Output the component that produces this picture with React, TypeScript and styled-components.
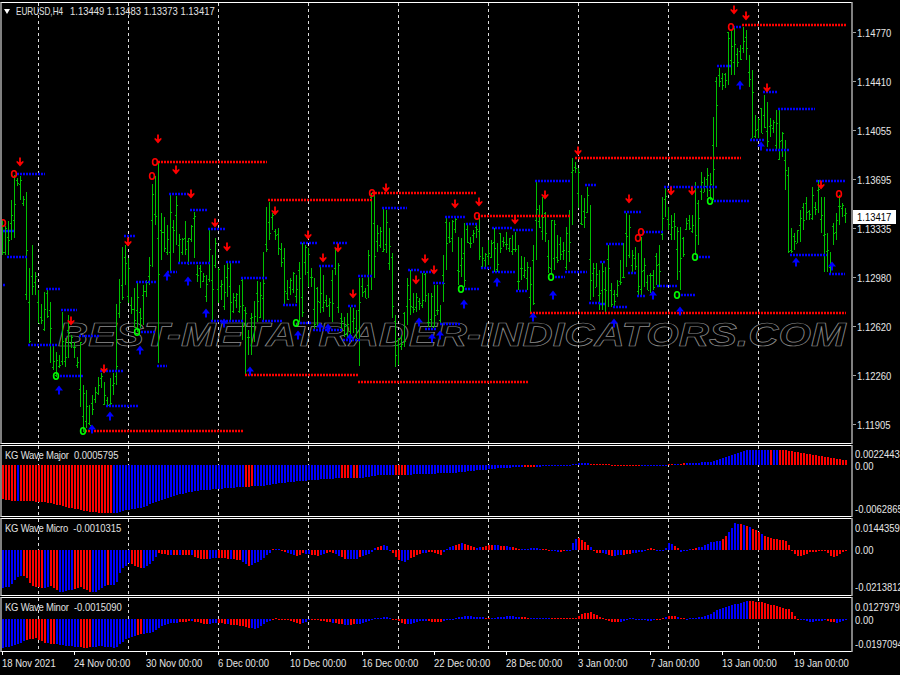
import React from 'react';
import styled, { createGlobalStyle } from 'styled-components';

const GlobalStyle = createGlobalStyle`
  html, body { margin: 0; padding: 0; background: #000; }
`;

const Page = styled.div`
  width: 900px;
  height: 675px;
  background: #000;
  overflow: hidden;
  display: flex;
  flex-direction: column;
  padding-top: 2px;
  box-sizing: border-box;
  font-family: "Liberation Sans", Arial, sans-serif;
  font-size: 11px;
  color: #e6e6e6;
`;
const PanelRow = styled.section<{ $h: number; $gap?: number }>`
  display: flex;
  height: ${p => p.$h}px;
  margin-top: ${p => p.$gap ?? 0}px;
  flex: none;
`;
const Plot = styled.div`
  position: relative;
  width: 852px;
  flex: none;
  box-sizing: border-box;
  border-left: 2px solid #808080;
  border-right: 1px solid #808080;
  border-top: 1px solid #fff;
  border-bottom: 1px solid #fff;
  overflow: hidden;
`;
const PlotSvg = styled.svg`
  position: relative;
  display: block;
  z-index: 1;
`;
const Axis = styled.div<{ $pad?: number }>`
  position: relative;
  flex: 1;
  min-width: 0;
  box-sizing: border-box;
  border-left: 1px solid #808080;
  padding-top: ${p => p.$pad ?? 0}px;
  overflow: hidden;
`;
const Squeezed = styled.span`
  display: inline-block;
  white-space: pre;
  transform: scaleX(0.86);
  transform-origin: left center;
`;
const Tight = styled.span<{ $ls: number }>`
  letter-spacing: ${p => p.$ls}px;
`;
const AxisRow = styled.div<{ $h: number; $gap?: number; $indent?: number }>`
  display: flex;
  align-items: center;
  height: ${p => p.$h}px;
  margin-top: ${p => p.$gap ?? 0}px;
  padding-left: ${p => p.$indent ?? 0}px;
  white-space: nowrap;
`;
const AxisTick = styled.i`
  display: block;
  flex: none;
  width: 3px;
  height: 1px;
  background: #a0a0a0;
  margin-right: 1px;
`;
const PriceTag = styled.div`
  position: absolute;
  left: 0;
  top: 208px;
  width: 43px;
  height: 14px;
  line-height: 14px;
  padding-left: 4px;
  box-sizing: border-box;
  background: #fff;
  color: #000;
`;
const Caption = styled.div`
  position: absolute;
  z-index: 2;
  left: 3px;
  top: 3px;
  white-space: pre;
  color: #e0e0e0;
`;
const ChartTitle = styled(Caption)`
  left: 14px;
  top: 2px;
  display: flex;
`;
const SymbolBox = styled.div`
  width: 54px;
  flex: none;
`;
const SymbolName = styled.span`
  display: inline-block;
  transform: scaleX(0.74);
  transform-origin: left center;
`;
const Triangle = styled.i`
  position: absolute;
  z-index: 2;
  left: 2px;
  top: 6px;
  width: 0;
  height: 0;
  border-left: 3.5px solid transparent;
  border-right: 3.5px solid transparent;
  border-top: 5px solid #fff;
`;
const Watermark = styled.div`
  position: absolute;
  z-index: 0;
  left: 56px;
  top: 313px;
  font-size: 33px;
  line-height: 38px;
  font-weight: 700;
  font-style: italic;
  white-space: nowrap;
  color: transparent;
  -webkit-text-stroke: 0.7px #8c8c8c;
  transform: scaleX(1.265);
  transform-origin: left center;
`;
const TimeAxis = styled.footer`
  display: flex;
  padding-left: 2px;
  flex: none;
`;
const TimeCell = styled.div`
  width: 72px;
  flex: none;
  display: flex;
  flex-direction: column;
  white-space: nowrap;
`;
const TimeTick = styled.i`
  display: block;
  width: 1px;
  height: 3px;
  background: #fff;
  margin-bottom: 2px;
`;

// x, high, low for every bar of the H4 series
const raw: number[][] = [
[2,220,255],[5,226,255],[8,221,255],[11,200,240],[14,175,238],[17,178,186],[20,176,200],[23,196,206],[26,192,300],[29,268,343],[32,245,295],[35,272,295],[38,290,323],[41,304,324],[44,292,331],[47,290,318],[50,302,363],[53,345,370],[56,352,377],[59,355,368],[62,312,365],[65,338,367],[68,315,358],[71,335,348],[74,342,358],[77,357,368],[80,342,407],[83,385,432],[86,390,428],[89,405,425],[92,395,415],[95,387,403],[98,377,395],[101,373,388],[104,382,405],[107,397,405],[110,378,405],[113,373,395],[116,304,385],[119,279,318],[122,247,300],[125,245,285],[128,258,303],[131,297,314],[134,288,328],[137,283,332],[140,308,328],[143,285,325],[146,280,297],[149,257,285],[152,184,267],[155,176,225],[158,163,363],[161,213,260],[164,217,252],[167,225,255],[170,194,272],[173,220,253],[176,196,245],[179,234,262],[182,238,255],[185,221,255],[188,238,265],[191,225,242],[194,212,258],[197,265,282],[200,265,288],[203,273,282],[206,275,302],[209,230,282],[212,255,322],[215,238,268],[218,268,303],[221,280,300],[224,265,310],[227,263,297],[230,263,320],[233,293,313],[236,293,308],[239,285,313],[242,278,340],[245,307,375],[248,330,355],[251,313,355],[254,301,342],[257,281,322],[260,282,318],[263,252,322],[266,207,252],[269,202,240],[272,213,230],[275,229,240],[278,228,255],[281,243,267],[284,248,305],[287,280,300],[290,278,295],[293,272,293],[296,275,303],[299,262,322],
[302,243,317],[305,245,275],[308,248,287],[311,268,287],[314,278,330],[317,287,327],[320,267,313],[323,275,312],[326,295,307],[329,298,317],[332,270,322],[335,248,275],[338,263,313],[341,313,330],[344,317,337],[347,313,337],[350,307,338],[353,308,333],[356,310,338],[359,278,366],[362,278,297],[365,288,298],[368,250,298],[371,193,290],[374,195,278],[377,225,252],[380,227,248],[383,208,252],[386,210,253],[389,228,270],[392,253,318],[395,315,367],[398,338,365],[401,335,350],[404,312,347],[407,278,325],[410,270,315],[413,293,313],[416,293,312],[419,298,310],[422,273,308],[425,273,302],[428,293,327],[431,293,327],[434,285,327],[437,285,315],[440,305,325],[443,255,302],[446,218,270],[449,222,243],[452,220,252],[455,218,233],[458,237,285],[461,238,277],[464,223,287],[467,225,243],[470,237,248],[473,230,243],[476,225,238],[479,218,260],[482,247,267],[485,253,268],[488,240,265],[491,240,258],[494,228,272],[497,243,272],[500,233,253],[503,237,247],[506,232,250],[509,238,252],[512,235,255],[515,232,252],[518,245,290],[521,256,280],[524,257,278],[527,262,290],[530,267,312],[533,245,305],[536,182,260],[539,205,228],[542,197,240],[545,212,242],[548,240,273],[551,220,273],[554,220,270],[557,235,263],[560,237,260],[563,242,260],[566,227,270],[569,210,262],[572,158,225],[575,162,173],[578,168,208],[581,195,225],[584,198,228],[587,187,213],[590,205,300],[593,263,297],[596,263,287],[599,270,310],
[602,263,310],[605,267,312],[608,245,307],[611,283,307],[614,290,307],[617,280,297],[620,260,285],[623,243,278],[626,213,267],[629,215,258],[632,250,273],[635,247,270],[638,253,295],[641,237,295],[644,258,287],[647,275,290],[650,273,293],[653,270,290],[656,253,285],[659,245,287],[662,197,240],[665,188,217],[668,207,230],[671,215,240],[674,213,240],[677,227,280],[680,227,290],[683,237,257],[686,218,230],[689,215,230],[692,215,233],[695,182,255],[698,200,245],[701,172,200],[704,177,192],[707,168,197],[710,173,200],[713,117,200],[716,77,147],[719,68,87],[722,73,90],[725,73,88],[728,32,85],[731,30,75],[734,28,75],[737,48,67],[740,45,60],[743,27,53],[746,30,60],[749,55,87],[752,70,138],[755,115,138],[758,118,138],[761,108,133],[764,95,128],[767,102,147],[770,118,137],[773,120,133],[776,110,150],[779,110,160],[782,132,157],[785,140,190],[788,167,253],[791,228,253],[794,233,250],[797,230,243],[800,210,242],[803,203,230],[806,197,220],[809,210,220],[812,187,220],[815,202,215],[818,180,213],[821,197,233],[824,197,272],[827,233,272],[830,252,273],[833,223,245],[836,213,240],[839,195,225],[842,203,217],[845,208,223],
];

const frac = (n: number) => { const s = Math.sin(n * 12.9898) * 43758.5453; return s - Math.floor(s); };

const ohlc = raw.map(([x, hi, lo], i) => ({
  x, hi, lo,
  close: Math.round(hi + (lo - hi) * frac(i + 1)),
  open: Math.round(hi + (lo - hi) * frac(i + 301)),
}));

const redLines: number[][] = [
  [158,267,162],[268,372,200],[372,477,193],[478,570,216],[575,741,158],[742,846,25],[530,846,313],[358,528,382],[245,358,375],[85,243,431],
];
const blueLines: number[][] = [
  [17,45,174],[3,15,231],[7,27,257],[3,6,285],[28,57,345],[46,60,289],[61,77,310],[79,99,336],[60,83,376],[100,123,371],[106,138,406],[157,167,366],[141,155,332],[124,135,236],[136,156,282],[167,177,272],[178,210,263],[169,188,194],[190,207,210],[208,225,229],[226,240,262],[241,267,278],[211,243,321],[262,282,321],[283,297,305],[300,318,243],[319,333,266],[333,348,243],[358,372,276],[382,407,208],[408,420,270],[420,433,272],[433,444,283],[445,465,217],[466,477,224],[492,513,228],[513,533,230],[481,491,268],[492,516,272],[465,480,289],[516,528,291],[535,570,181],[585,596,185],[565,587,272],[555,565,277],[589,600,303],[300,312,323],[313,342,330],[343,360,340],[348,357,306],[440,461,324],[425,437,329],[624,641,212],[664,717,187],[714,749,201],[717,732,66],[733,741,27],[763,777,92],[778,815,109],[750,765,140],[766,789,150],[816,845,181],[606,624,244],[628,636,273],[637,645,296],[657,677,286],[643,663,232],[681,695,295],[696,710,257],[790,827,255],[829,845,274],[600,606,262],[613,627,307],[600,605,304],
];
const redArrows: number[][] = [
  [20,162],[158,139],[176,170],[191,194],[215,223],[275,211],[128,242],[71,321],[104,369],[227,247],[308,235],[323,258],[338,248],[353,294],[425,259],[416,280],[434,270],[386,188],[455,204],[479,202],[515,220],[545,195],[578,151],[629,199],[671,191],[692,191],[734,10],[746,16],[767,88],[821,185],
];
const blueArrows: number[][] = [
  [59,390],[92,429],[110,416],[140,350],[188,281],[167,276],[206,313],[224,323],[250,371],[298,335],[320,327],[328,328],[350,338],[419,322],[432,338],[440,335],[497,282],[464,304],[553,295],[533,317],[740,85],[761,146],[614,323],[653,295],[680,311],[796,262],[832,266],
];
const redRings: number[][] = [[3,223],[14,174],[155,162],[152,176],[372,193],[477,216],[731,27],[839,194],[641,232],[638,238]];
const greenRings: number[][] = [[56,376],[83,431],[137,332],[296,323],[461,289],[551,277],[677,295],[695,257],[710,201]];

const majorEnv: number[][] = [[2,499],[12,501],[30,501],[50,503],[70,508],[85,511],[100,513],[115,513],[125,510],[140,508],[160,500],[180,494],[200,490],[218,489],[240,487],[260,486],[280,483],[300,481],[310,480],[340,478],[360,478],[380,475],[400,475],[420,474],[450,473],[480,470],[500,468],[520,467],[560,466],[578,463],[600,464],[640,466],[660,465],[690,463],[710,462],[730,455],[745,450],[785,450],[800,453],[815,455],[830,458],[845,460]];
const majorRed: number[][] = [[2,16],[20,112],[245,253],[340,345],[347,350],[352,358],[394,406],[524,536],[590,640],[668,672],[680,684],[770,772],[778,846]];

const microEnv: number[][] = [[2,588],[10,586],[15,578],[20,576],[25,576],[30,585],[40,588],[45,588],[50,586],[55,590],[60,592],[70,590],[80,587],[90,592],[95,592],[105,585],[115,585],[120,570],[128,563],[135,566],[142,569],[150,563],[158,553],[170,555],[190,555],[200,559],[220,558],[240,560],[248,566],[260,560],[270,552],[273,548],[280,550],[290,554],[298,556],[300,553],[318,556],[330,552],[345,559],[355,559],[370,553],[375,547],[385,545],[390,551],[398,560],[405,562],[410,558],[420,553],[430,552],[440,555],[447,548],[455,545],[462,543],[475,548],[490,545],[505,546],[520,549],[535,548],[550,550],[558,552],[570,550],[572,543],[577,537],[585,543],[592,549],[597,554],[600,552],[610,556],[620,555],[640,552],[650,548],[660,551],[665,548],[668,543],[675,546],[680,552],[690,549],[700,547],[710,542],[720,541],[730,530],[734,523],[745,525],[755,530],[765,537],[785,541],[790,548],[795,556],[800,556],[810,552],[825,551],[830,556],[835,557],[840,553],[845,551]];
const microRed: number[][] = [[22,43],[50,58],[73,91],[107,110],[130,142],[157,170],[173,178],[182,190],[192,208],[218,228],[232,240],[247,250],[270,274],[280,286],[296,303],[310,320],[325,333],[340,345],[358,362],[375,382],[392,400],[410,420],[426,442],[455,460],[462,476],[482,492],[500,505],[512,520],[540,550],[558,564],[577,590],[592,600],[608,614],[622,630],[646,656],[672,678],[690,696],[722,726],[740,742],[746,748],[752,760],[762,846],[790,800],[826,832]];

const minorEnv: number[][] = [[2,648],[15,645],[25,640],[35,638],[45,643],[60,645],[70,646],[85,648],[100,646],[115,648],[125,639],[140,634],[150,633],[165,624],[190,621],[205,624],[218,623],[240,626],[255,629],[268,621],[275,618],[290,621],[300,624],[310,619],[345,625],[360,624],[375,618],[385,617],[398,621],[405,625],[420,621],[440,622],[455,618],[465,616],[490,618],[510,616],[530,618],[575,618],[580,614],[590,612],[600,617],[610,622],[620,622],[630,618],[650,621],[660,619],[668,616],[675,616],[685,619],[700,617],[710,614],[715,610],[730,605],[740,603],[745,601],[760,602],[775,606],[790,610],[795,618],[810,622],[825,620],[835,623],[845,620]];
const minorRed: number[][] = [[25,46],[50,55],[79,91],[136,142],[178,190],[193,208],[216,225],[229,250],[270,300],[310,330],[334,342],[350,356],[392,398],[394,406],[427,443],[485,490],[520,528],[550,600],[600,620],[654,664],[668,676],[680,684],[747,800],[825,835]];

const interp = (env: number[][], x: number) => {
  for (let i = 1; i < env.length; i++) {
    if (x <= env[i][0]) {
      const [x0, y0] = env[i - 1];
      const [x1, y1] = env[i];
      return y0 + ((y1 - y0) * (x - x0)) / (x1 - x0);
    }
  }
  return env[env.length - 1][1];
};

const gridXs = [38.5, 128.5, 218.5, 308.5, 398.5, 488.5, 578.5, 668.5, 758.5];

const Grid = ({ top, bottom }: { top: number; bottom: number }) => (
  <g stroke="#dcdcdc" strokeWidth={1} strokeDasharray="3 3" shapeRendering="crispEdges">
    {gridXs.map(x => <line key={x} x1={x} x2={x} y1={top} y2={bottom} />)}
  </g>
);

const Histogram = ({ env, red, zero }: { env: number[][]; red: number[][]; zero: number }) => (
  <g shapeRendering="crispEdges">
    {ohlc.map(({ x }) => {
      const y = Math.round(interp(env, x));
      const isRed = red.some(([a, b]) => x >= a && x < b);
      return (
        <rect key={x} x={x - 0.5} width={2.5} y={Math.min(y, zero)} height={Math.max(1, Math.abs(y - zero))} fill={isRed ? '#ff0000' : '#0000ff'} />
      );
    })}
  </g>
);

const Bars = () => (
  <g stroke="#00c000" strokeWidth={1} shapeRendering="crispEdges">
    {ohlc.map(b => (
      <g key={b.x}>
        <line x1={b.x + 0.5} x2={b.x + 0.5} y1={b.hi} y2={b.lo} />
        <line x1={b.x - 1} x2={b.x} y1={b.open + 0.5} y2={b.open + 0.5} />
        <line x1={b.x + 1} x2={b.x + 2} y1={b.close + 0.5} y2={b.close + 0.5} />
      </g>
    ))}
  </g>
);

const DotLines = ({ lines, color }: { lines: number[][]; color: string }) => (
  <g stroke={color} strokeWidth={2.6} strokeDasharray="2 1">
    {lines.map(([a, b, y]) => <line key={`${a}-${y}`} x1={a} x2={b} y1={y} y2={y} />)}
  </g>
);

const MainPlot = () => (
  <PlotSvg width={849} height={440} viewBox="2 3 849 440">
    <Grid top={3} bottom={443} />
    <Bars />
    <DotLines lines={blueLines} color="#0000ff" />
    <DotLines lines={redLines} color="#ff0000" />
    <g fill="#0000ff">
      {blueArrows.map(([x, y]) => (
        <path key={`${x}-${y}`} transform={`translate(${x} ${y})`} d="M0,-4.5 L4,0.5 L1,0.5 L1,4.5 L-1,4.5 L-1,0.5 L-4,0.5Z" />
      ))}
    </g>
    <g fill="#ff0000">
      {redArrows.map(([x, y]) => (
        <path key={`${x}-${y}`} transform={`translate(${x} ${y})`} d="M-0.9,-4.5 L0.9,-4.5 L0.9,0.2 L3.2,-1.2 L3.6,0.2 L0,4.5 L-3.6,0.2 L-3.2,-1.2 L-0.9,0.2Z" />
      ))}
    </g>
    <g fill="none" strokeWidth={1.6}>
      {redRings.map(([x, y]) => <ellipse key={`${x}-${y}`} cx={x} cy={y} rx={2.4} ry={3.2} stroke="#ff0000" />)}
      {greenRings.map(([x, y]) => <ellipse key={`${x}-${y}`} cx={x} cy={y} rx={2.4} ry={3.2} stroke="#00ff00" />)}
    </g>
  </PlotSvg>
);

const SubPlot = ({ top, height, env, red, zero }: { top: number; height: number; env: number[][]; red: number[][]; zero: number }) => (
  <PlotSvg width={849} height={height} viewBox={`2 ${top} 849 ${height}`}>
    <Grid top={top} bottom={top + height} />
    <Histogram env={env} red={red} zero={zero} />
  </PlotSvg>
);

const prices = ['1.14770', '1.14410', '1.14055', '1.13695', '1.13335', '1.12980', '1.12620', '1.12260', '1.11905'];
const times = ['18 Nov 2021', '24 Nov 00:00', '30 Nov 00:00', '6 Dec 00:00', '10 Dec 00:00', '16 Dec 00:00', '22 Dec 00:00', '28 Dec 00:00', '3 Jan 00:00', '7 Jan 00:00', '13 Jan 00:00', '19 Jan 00:00'];

const PriceLabel = ({ text }: { text: string }) => (
  <AxisRow $h={49}>
    <AxisTick />
    <Squeezed>{text}</Squeezed>
  </AxisRow>
);
const ScaleLabel = ({ text, gap }: { text: string; gap?: number }) => (
  <AxisRow $h={12} $gap={gap} $indent={2}>
    <Squeezed>{text}</Squeezed>
  </AxisRow>
);

export default function App() {
  return (
    <Page>
      <GlobalStyle />
      <PanelRow $h={442}>
        <Plot>
          <Triangle />
          <ChartTitle>
            <SymbolBox><SymbolName>EURUSD,H4</SymbolName></SymbolBox>
            <Squeezed>1.13449 1.13483 1.13373 1.13417</Squeezed>
          </ChartTitle>
          <Watermark>BEST-METATRADER-INDICATORS.COM</Watermark>
          <MainPlot />
        </Plot>
        <Axis $pad={6}>
          {prices.map(p => <PriceLabel key={p} text={p} />)}
          <PriceTag><Squeezed>1.13417</Squeezed></PriceTag>
        </Axis>
      </PanelRow>
      <PanelRow $h={72} $gap={1}>
        <Plot>
          <Caption><Squeezed><Tight $ls={-0.25}>KG Wave Major</Tight>{'  0.0005795'}</Squeezed></Caption>
          <SubPlot top={446} height={70} env={majorEnv} red={majorRed} zero={465} />
        </Plot>
        <Axis>
          <ScaleLabel text="0.0022443" gap={3} />
          <ScaleLabel text="0.00" />
          <ScaleLabel text="-0.0062865" gap={31} />
        </Axis>
      </PanelRow>
      <PanelRow $h={78} $gap={1}>
        <Plot>
          <Caption><Squeezed><Tight $ls={-0.25}>KG Wave Micro</Tight>{'  -0.0010315'}</Squeezed></Caption>
          <SubPlot top={519} height={76} env={microEnv} red={microRed} zero={550} />
        </Plot>
        <Axis>
          <ScaleLabel text="0.0144359" gap={4} />
          <ScaleLabel text="0.00" gap={10} />
          <ScaleLabel text="-0.0213812" gap={25} />
        </Axis>
      </PanelRow>
      <PanelRow $h={55} $gap={1}>
        <Plot>
          <Caption><Squeezed><Tight $ls={-0.25}>KG Wave Minor</Tight>{'  -0.0015090'}</Squeezed></Caption>
          <SubPlot top={598} height={53} env={minorEnv} red={minorRed} zero={619} />
        </Plot>
        <Axis>
          <ScaleLabel text="0.0127979" gap={4} />
          <ScaleLabel text="0.00" gap={1} />
          <ScaleLabel text="-0.0197094" gap={12} />
        </Axis>
      </PanelRow>
      <TimeAxis>
        {times.map(t => (
          <TimeCell key={t}>
            <TimeTick />
            <Squeezed>{t}</Squeezed>
          </TimeCell>
        ))}
      </TimeAxis>
    </Page>
  );
}
